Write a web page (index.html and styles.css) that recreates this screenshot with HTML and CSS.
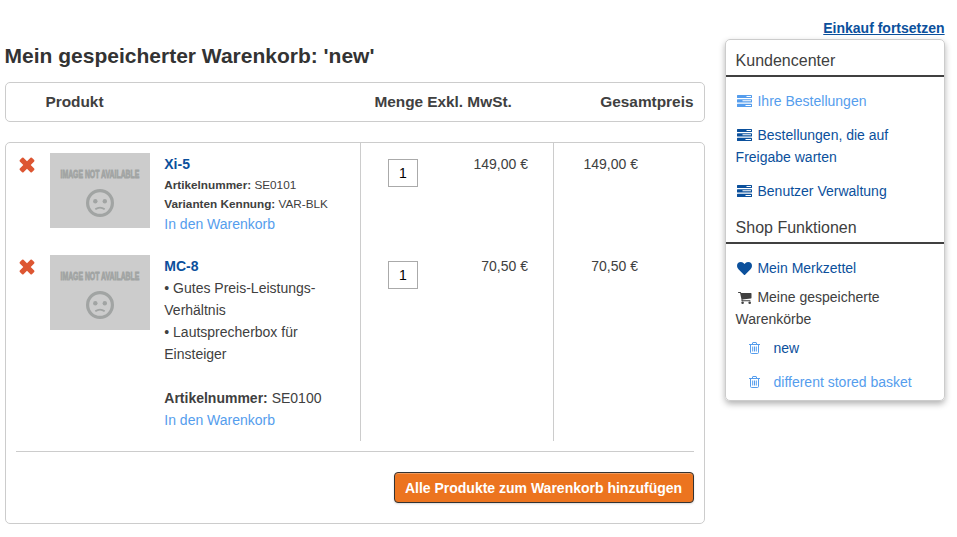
FILE: index.html
```html
<!DOCTYPE html>
<html lang="de">
<head>
<meta charset="utf-8">
<title>Mein gespeicherter Warenkorb</title>
<link rel="stylesheet" href="styles.css">
</head>
<body>
<svg class="defs" width="0" height="0" aria-hidden="true">
  <symbol id="remove" viewBox="0 0 16 16"><path d="M4.5.8 8 4.3 11.5.8Q12.2.3 12.9.8L15.2 3.1Q15.7 3.8 15.2 4.5L11.7 8 15.2 11.5Q15.7 12.2 15.2 12.9L12.9 15.2Q12.2 15.7 11.5 15.2L8 11.7 4.5 15.2Q3.8 15.7 3.1 15.2L.8 12.9Q.3 12.2.8 11.5L4.3 8 .8 4.5Q.3 3.8.8 3.1L3.1.8Q3.8.3 4.5.8Z"/></symbol>
  <symbol id="tasks" viewBox="0 0 15 12"><path fill-rule="evenodd" d="M.6 0H14.4Q15 0 15 .6V2.4Q15 3 14.4 3H.6Q0 3 0 2.4V.6Q0 0 .6 0ZM9.5 1V2H14V1ZM.6 4.2H14.4Q15 4.2 15 4.8V6.9Q15 7.5 14.4 7.5H.6Q0 7.5 0 6.9V4.8Q0 4.2.6 4.2ZM5.5 5.3V6.3H14V5.3ZM.6 8.8H14.4Q15 8.8 15 9.4V11.4Q15 12 14.4 12H.6Q0 12 0 11.4V9.4Q0 8.8.6 8.8ZM8.5 10V11H14V10Z"/></symbol>
  <symbol id="heart" viewBox="0 0 15 13"><path d="M7.5 13Q7.2 13 6.9 12.7L1.7 7.5Q0 5.8 0 4 0 0 4 0 6 0 7.5 1.9 9 0 11 0 15 0 15 4 15 5.8 13.3 7.5L8.1 12.7Q7.8 13 7.5 13Z"/></symbol>
  <symbol id="cart" viewBox="0 0 14 12"><path d="M0 .5Q0 0 .5 0H2.4Q3 0 3.2 1H12.9Q13.5 1 13.5 1.6V5.8Q13.5 6.3 12.9 6.4L4.4 7.4 4.5 8.3H12Q12.5 8.3 12.5 8.8T12 9.3H3.9Q3.3 9.3 3.4 8.6L3.6 8 2.1 1H.5Q0 1 0 .5Z"/><circle cx="4.6" cy="10.7" r="1.3"/><circle cx="11.7" cy="10.7" r="1.3"/></symbol>
  <symbol id="trash" viewBox="0 0 11 12"><path fill="none" stroke="currentColor" d="M0 2.5H11M3.3 2.3 3.8.5H7.2L7.7 2.3M1.5 2.5V10.3Q1.5 11.5 2.5 11.5H8.5Q9.5 11.5 9.5 10.3V2.5M3.7 4.5V9.5M5.5 4.5V9.5M7.3 4.5V9.5"/></symbol>
  <symbol id="sad" viewBox="0 0 28 28">
    <circle cx="14" cy="14" r="12.4" fill="none" stroke="currentColor" stroke-width="3.2"/>
    <circle cx="9.3" cy="12.3" r="2.2"/><circle cx="18.8" cy="12.3" r="2.2"/>
    <path d="M9.3 20.3Q14 16.8 18.7 20.3" fill="none" stroke="currentColor" stroke-width="1.8"/>
  </symbol>
</svg>
<div class="page">
  <main class="basket">
    <h1>Mein gespeicherter Warenkorb: 'new'</h1>
    <div class="head">
      <span class="head-product">Produkt</span><span>Menge</span><span class="head-price">Exkl. MwSt.</span><span class="head-total">Gesamtpreis</span>
    </div>
    <section class="items">
      <div class="rows">
        <div class="item">
          <div class="product">
            <svg class="remove"><use href="#remove"/></svg>
            <svg class="thumb" viewBox="0 0 100 75"><text transform="translate(10.5 24.6) scale(.655 1)">IMAGE NOT AVAILABLE</text><use href="#sad" x="36" y="36" width="28" height="28"/></svg>
            <div class="info">
              <a class="name" href="#">Xi-5</a>
              <div class="attr"><b>Artikelnummer:</b> SE0101</div>
              <div class="attr"><b>Varianten Kennung:</b> VAR-BLK</div>
              <a class="light" href="#">In den Warenkorb</a>
            </div>
          </div>
          <div class="amount"><input value="1" aria-label="Menge"><span>149,00 €</span></div>
          <div class="total">149,00 €</div>
        </div>
        <div class="item">
          <div class="product">
            <svg class="remove"><use href="#remove"/></svg>
            <svg class="thumb" viewBox="0 0 100 75"><text transform="translate(10.5 24.6) scale(.655 1)">IMAGE NOT AVAILABLE</text><use href="#sad" x="36" y="36" width="28" height="28"/></svg>
            <div class="info">
              <a class="name" href="#">MC-8</a>
              <p>• Gutes Preis-Leistungs-<br>Verhältnis<br>• Lautsprecherbox für<br>Einsteiger</p>
              <div><b>Artikelnummer:</b> SE0100</div>
              <a class="light" href="#">In den Warenkorb</a>
            </div>
          </div>
          <div class="amount"><input value="1" aria-label="Menge"><span>70,50 €</span></div>
          <div class="total">70,50 €</div>
        </div>
      </div>
      <div class="actions"><button>Alle Produkte zum Warenkorb hinzufügen</button></div>
    </section>
  </main>
  <aside class="side">
    <a class="continue" href="#">Einkauf fortsetzen</a>
    <nav class="panel">
      <h2>Kundencenter</h2>
      <ul class="links">
        <li><a class="light" href="#"><svg class="icon tasks"><use href="#tasks"/></svg>Ihre Bestellungen</a></li>
        <li><a href="#"><svg class="icon tasks"><use href="#tasks"/></svg>Bestellungen, die auf Freigabe warten</a></li>
        <li><a href="#"><svg class="icon tasks"><use href="#tasks"/></svg>Benutzer Verwaltung</a></li>
      </ul>
      <h2>Shop Funktionen</h2>
      <div class="functions">
        <a class="wish" href="#"><svg class="icon heart"><use href="#heart"/></svg>Mein Merkzettel</a>
        <div class="stored"><svg class="icon cart"><use href="#cart"/></svg>Meine gespeicherte Warenkörbe</div>
        <ul class="baskets">
          <li><svg class="trash"><use href="#trash"/></svg><a href="#">new</a></li>
          <li><svg class="trash"><use href="#trash"/></svg><a class="light" href="#">different stored basket</a></li>
        </ul>
      </div>
    </nav>
  </aside>
</div>
</body>
</html>
```
FILE: styles.css
```css
* { box-sizing: border-box; }
body {
  margin: 0;
  background: #fff;
  color: #404040;
  font: 14px/22px "Liberation Sans", Arial, sans-serif;
}
h1, h2, p, ul { margin: 0; padding: 0; }
ul { list-style: none; }
a { color: #0b509c; text-decoration: none; }
svg { fill: currentColor; flex: none; }
.defs { position: absolute; }
.page { display: flex; gap: 20px; padding-left: 5px; }
.basket { width: 700px; padding-top: 42px; }
h1 { font-size: 21px; line-height: 28px; color: #333; margin-left: -.4px; }
.head {
  display: flex;
  height: 40px;
  margin-top: 12px;
  padding: 0 10.5px 0 39.4px;
  border: 1px solid #ccc;
  border-radius: 5px;
  font-size: 15.4px;
  font-weight: bold;
  line-height: 38px;
}
.head-product { width: 329px; }
.head-price { margin-left: 4px; }
.head-total { margin-left: auto; }
.items {
  height: 382px;
  margin-top: 20px;
  padding: 0 10px;
  border: 1px solid #ccc;
  border-radius: 5px;
}
.rows { height: 309px; padding-bottom: 10px; border-bottom: 1px solid #ccc; }
.item {
  display: grid;
  grid-template-columns: 345px 193px 1fr;
  height: 102px;
}
.item + .item { height: 196px; }
.product { display: flex; padding-top: 10px; border-right: 1px solid #ccc; }
.remove { width: 16px; height: 16px; margin: 4px 15.4px 0 2.6px; color: #dd5632; }
.thumb { width: 100px; height: 75px; margin-right: 14.3px; background: #ccc; color: #a1a4a3; }
.thumb text { font: bold 10.5px "Liberation Sans", sans-serif; stroke: #a1a4a3; stroke-width: .8px; }
.info { width: 175px; }
.info a { display: block; }
.name { font-weight: bold; }
.info p { margin-bottom: 22px; }
.attr { font-size: 11.75px; line-height: 19px; }
a.light, .trash { color: #559ded; }
.amount {
  display: flex;
  justify-content: space-between;
  padding: 10px 25px 0 27px;
  border-right: 1px solid #ccc;
}
input {
  width: 30px;
  height: 28px;
  margin-top: 6px;
  padding: 0;
  border: 1px solid #aaa;
  border-radius: 0;
  background: #fff;
  color: #000;
  font: 14px "Liberation Sans", sans-serif;
  text-align: center;
}
.total { padding: 10px 56px 0 0; text-align: right; }
.actions { display: flex; justify-content: flex-end; padding-top: 20px; }
button {
  height: 31px;
  width: 300px;
  padding: 0 1px 0 0;
  border: 1px solid #333;
  border-radius: 4px;
  background: #ec741f;
  box-shadow: inset 0 1px 0 #f19a5c, 0 1px 2px rgba(0, 0, 0, .15);
  color: #fff;
  font: bold 14px "Liberation Sans", sans-serif;
}
.side { width: 220px; padding-top: 17px; }
.continue { display: block; padding-right: .4px; text-align: right; font-weight: bold; text-decoration: underline; }
.panel {
  height: 362px;
  border: 1px solid #ccc;
  border-radius: 5px;
  box-shadow: 0 3px 6px rgba(0, 0, 0, .3);
}
h2 {
  height: 37px;
  padding: 10px 9.6px 0;
  border-bottom: 2px solid #404040;
  font-size: 16px;
  font-weight: normal;
}
.links { height: 130px; padding: 13px 9.6px 0; }
.links li { margin-bottom: 12px; }
.icon { display: inline-block; }
.tasks { width: 15px; height: 12px; margin: 0 5.9px 0 1px; vertical-align: -1px; }
.functions { padding: 13px 9.6px 0; }
.wish { display: block; }
.heart { width: 15px; height: 13px; margin: 0 5.8px 0 1px; vertical-align: -2px; }
.stored { margin-top: 7px; }
.cart { width: 14px; height: 12px; margin: 0 5.8px 0 2px; vertical-align: -2px; }
.baskets { padding: 7px 0 0 13.4px; }
.baskets li { display: flex; align-items: center; gap: 13.5px; margin-bottom: 12px; }
.trash { width: 11px; height: 12px; }
```
